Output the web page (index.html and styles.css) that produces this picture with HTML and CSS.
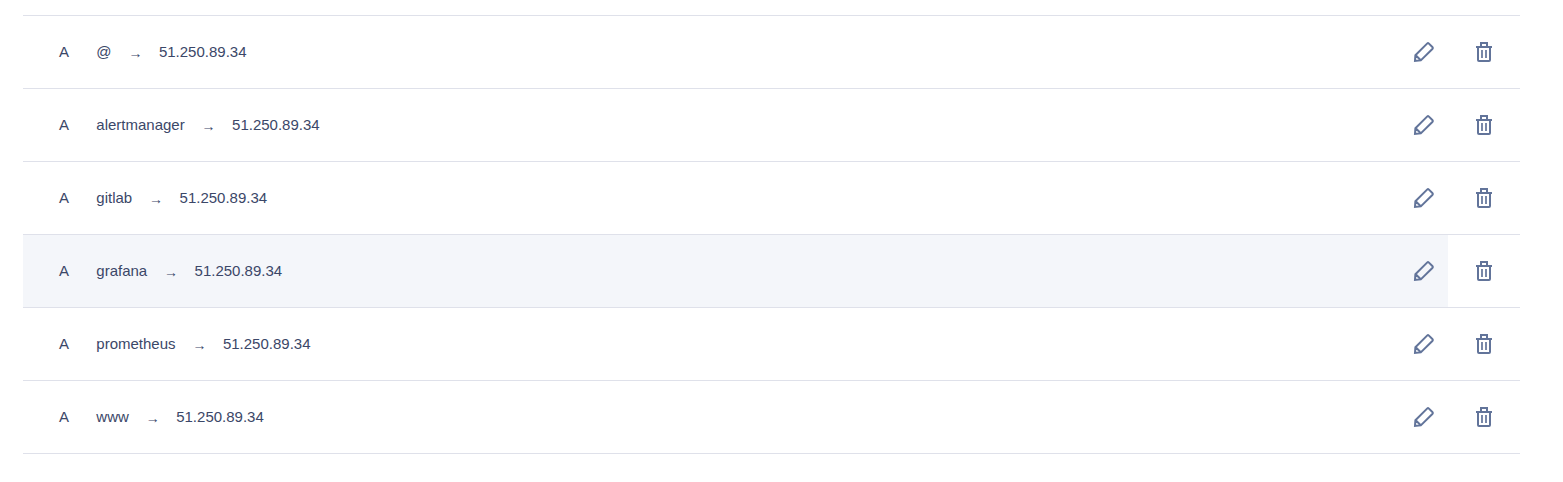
FILE: index.html
```html
<!DOCTYPE html>
<html lang="en">
<head>
<meta charset="utf-8">
<title>DNS records</title>
<link rel="stylesheet" href="styles.css">
</head>
<body>
<svg class="sprite" aria-hidden="true">
  <symbol id="edit" viewBox="0 0 24 24"><path d="M3 20.8L3.4 15.2L15.3 3.4Q16 2.8 16.7 3.4L20.6 7.3Q21.2 8 20.6 8.7L8.8 20.4L3 20.8ZM3.7 15.2L8.8 20.3"/></symbol>
  <symbol id="trash" viewBox="0 0 24 24"><path d="M4 7H20M6 7V20Q6 21 7 21H17Q18 21 18 20V7M9 7V3H15V7"/><path d="M10 10V18M14 10V18" stroke-width="1.7"/></symbol>
</svg>
<ul class="records" id="records"></ul>
<script src="records.js"></script>
</body>
</html>
```
FILE: styles.css
```css
body { margin: 0; background: #fff; color: #3b4768; font: 15px/20px "Liberation Sans", Arial, sans-serif; }
.sprite { display: none; }
.records { list-style: none; margin: 15px 43px 0 23px; padding: 0; border-top: 1px solid #dfe1ea; }
.record { display: flex; height: 72px; border-bottom: 1px solid #dfe1ea; }
.main { flex: 1; display: flex; align-items: center; padding: 0 12px 0 36px; }
.main.active { background: #f4f6fa; }
.type { width: 37.3px; }
.arrow { margin: 0 16.5px 0 16.9px; padding-top: 2px; font-size: 14px; color: #3b4768; }
.icon { width: 24px; height: 24px; fill: none; stroke: #62749a; stroke-width: 2; }
.main .icon { margin-left: auto; }
.remove { width: 72px; display: flex; align-items: center; justify-content: center; }
```
FILE: records.js
```js
const names = ["@", "alertmanager", "gitlab", "grafana", "prometheus", "www"];
document.getElementById("records").innerHTML = names.map(name => `
<li class="record">
  <div class="main${name === "grafana" ? " active" : ""}">
    <span class="type">A</span><span>${name}</span><span class="arrow">→</span><span>51.250.89.34</span>
    <svg class="icon"><use href="#edit"/></svg>
  </div>
  <div class="remove"><svg class="icon"><use href="#trash"/></svg></div>
</li>`).join("");
```
